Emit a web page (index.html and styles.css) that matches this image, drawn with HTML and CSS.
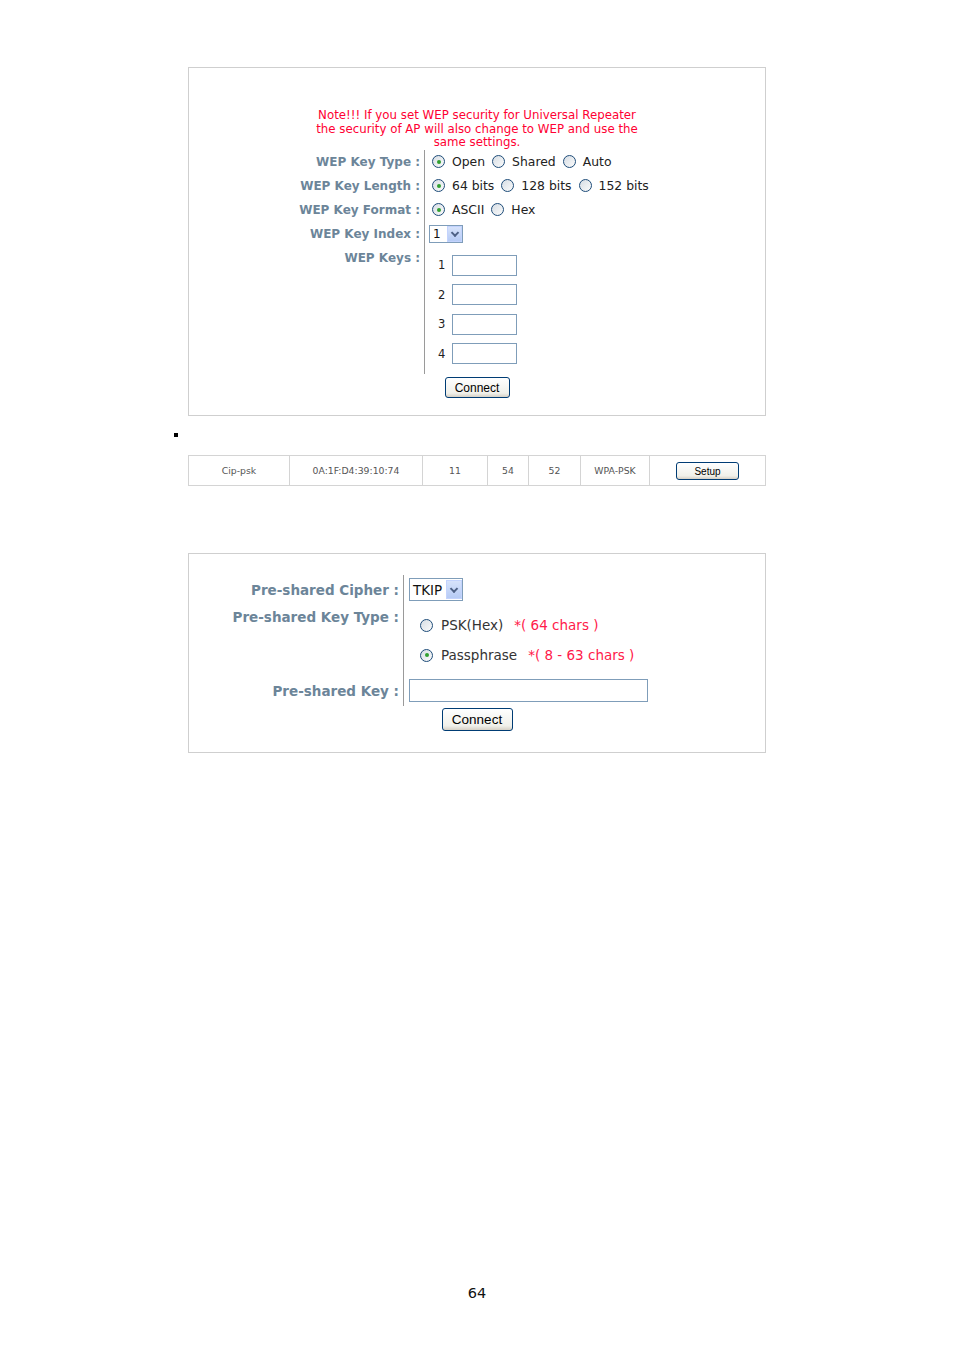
FILE: index.html
```html
<!DOCTYPE html>
<html lang="en">
<head>
  <meta charset="UTF-8" />
  <title>Universal Repeater Security</title>
  <link rel="stylesheet" href="styles.css">
</head>
<body>
  <div class="page">

    <!-- WEP settings -->
    <div class="panel wep-panel">
      <p class="note">Note!!! If you set WEP security for Universal Repeater<br>the security of AP will also change to WEP and use the<br>same settings.</p>

      <div class="form-grid wep-grid">
        <div class="label">WEP Key Type :</div>
        <div class="field">
          <span class="radio checked"></span><span class="opt">Open</span>
          <span class="radio"></span><span class="opt">Shared</span>
          <span class="radio"></span><span class="opt">Auto</span>
        </div>

        <div class="label">WEP Key Length :</div>
        <div class="field">
          <span class="radio checked"></span><span class="opt">64 bits</span>
          <span class="radio"></span><span class="opt">128 bits</span>
          <span class="radio"></span><span class="opt">152 bits</span>
        </div>

        <div class="label">WEP Key Format :</div>
        <div class="field">
          <span class="radio checked"></span><span class="opt">ASCII</span>
          <span class="radio"></span><span class="opt">Hex</span>
        </div>

        <div class="label">WEP Key Index :</div>
        <div class="field">
          <span class="select small-select"><span class="select-val">1</span><span class="select-btn"></span></span>
        </div>

        <div class="label keys-label">WEP Keys :</div>
        <div class="field keys">
          <div class="key-row"><span class="key-no">1</span><span class="text-input key-input"></span></div>
          <div class="key-row"><span class="key-no">2</span><span class="text-input key-input"></span></div>
          <div class="key-row"><span class="key-no">3</span><span class="text-input key-input"></span></div>
          <div class="key-row"><span class="key-no">4</span><span class="text-input key-input"></span></div>
        </div>
      </div>

      <div class="btn-row"><span class="btn wep-btn">Connect</span></div>
    </div>

    <div class="bullet"></div>

    <!-- site survey row -->
    <table class="survey">
      <tr>
        <td class="c1">Cip-psk</td>
        <td class="c2">0A:1F:D4:39:10:74</td>
        <td class="c3">11</td>
        <td class="c4">54</td>
        <td class="c5">52</td>
        <td class="c6">WPA-PSK</td>
        <td class="c7"><span class="btn setup-btn">Setup</span></td>
      </tr>
    </table>

    <!-- WPA settings -->
    <div class="panel psk-panel">
      <div class="form-grid psk-grid">
        <div class="label">Pre-shared Cipher :</div>
        <div class="field">
          <span class="select big-select"><span class="select-val">TKIP</span><span class="select-btn"></span></span>
        </div>

        <div class="label type-label">Pre-shared Key Type :</div>
        <div class="field psk-types">
          <div class="psk-opt"><span class="radio"></span><span class="opt">PSK(Hex)</span><span class="hint">*( 64 chars )</span></div>
          <div class="psk-opt"><span class="radio checked"></span><span class="opt">Passphrase</span><span class="hint">*( 8 - 63 chars )</span></div>
        </div>

        <div class="label key-label">Pre-shared Key :</div>
        <div class="field">
          <span class="text-input psk-input"></span>
        </div>
      </div>

      <div class="btn-row"><span class="btn psk-btn">Connect</span></div>
    </div>

    <div class="page-no">64</div>
  </div>
</body>
</html>
```

FILE: styles.css
```css
body {
  margin: 0;
  background: #fff;
  font-family: "DejaVu Sans", Verdana, sans-serif;
}

.page {
  width: 954px;
  height: 1351px;
  padding-top: 67px;
  box-sizing: border-box;
  position: relative;
}

.panel {
  margin-left: 188px;
  width: 576px;
  border: 1px solid #cfcfcf;
}

/* ---------- WEP panel ---------- */

.wep-panel {
  height: 347px;
}

.note {
  margin: 41px 0 0;
  color: #ff0033;
  font-size: 11.8px;
  line-height: 13.6px;
  text-align: center;
}

.form-grid {
  display: grid;
}

.label {
  color: #6c8599;
  font-weight: bold;
  text-align: right;
  padding-right: 4px;
  white-space: nowrap;
}

.field {
  border-left: 1px solid #9a9a9a;
  display: flex;
  align-items: center;
  white-space: nowrap;
}

.wep-grid {
  grid-template-columns: 235px 1fr;
  grid-template-rows: repeat(4, 24px) auto;
  margin-top: 0;
  font-size: 12px;
}

.wep-grid .label {
  line-height: 24px;
}

.wep-grid .field {
  padding-left: 7px;
  font-size: 12.4px;
  color: #222;
}

.radio {
  width: 11px;
  height: 11px;
  border: 1px solid #1e4c79;
  border-radius: 50%;
  background: linear-gradient(135deg, #d6dde4, #fbfbfb);
  box-sizing: content-box;
  display: inline-flex;
  align-items: center;
  justify-content: center;
  flex: none;
}

.radio.checked::after {
  content: "";
  width: 4px;
  height: 4px;
  border-radius: 50%;
  background: #30a030;
}

.wep-grid .opt {
  margin-left: 7px;
  margin-right: 7px;
}

.select {
  display: inline-flex;
  align-items: center;
  border: 1px solid #7f9db9;
  background: #fff;
  color: #111;
}

.select-btn {
  background: linear-gradient(#d7e3fb, #b6cbf5);
  border: 1px solid #c3d3fd;
  position: relative;
}

.select-btn::after {
  content: "";
  position: absolute;
  left: 50%;
  top: 50%;
  width: 4px;
  height: 4px;
  border-right: 2px solid #4d6185;
  border-bottom: 2px solid #4d6185;
  transform: translate(-50%, -70%) rotate(45deg);
}

.small-select {
  height: 16px;
  margin-left: -3px;
  font-size: 12px;
}

.small-select .select-val {
  width: 14px;
  padding-left: 3px;
}

.small-select .select-btn {
  width: 13px;
  height: 14px;
}

.keys-label {
  align-self: start;
}

.wep-grid .keys {
  flex-direction: column;
  align-items: flex-start;
  padding-top: 5px;
  padding-bottom: 6px;
  padding-left: 13px;
}

.key-row {
  height: 29.4px;
  flex: none;
  display: flex;
  align-items: center;
}

.key-no {
  width: 14px;
  font-size: 11.5px;
  color: #222;
}

.text-input {
  display: inline-block;
  border: 1px solid #7f9db9;
  background: #fff;
  box-sizing: border-box;
}

.key-input {
  width: 65px;
  height: 21px;
}

.btn-row {
  display: flex;
  justify-content: center;
}

.btn {
  display: inline-flex;
  align-items: center;
  justify-content: center;
  box-sizing: border-box;
  border: 1px solid #003c74;
  border-radius: 3px;
  background: linear-gradient(#ffffff, #f0f0ea 80%, #d6d0c5);
  font-family: "Liberation Sans", Arial, sans-serif;
  color: #000;
}

.wep-btn {
  width: 65px;
  height: 21px;
  font-size: 12px;
  margin-top: 3px;
}

/* ---------- survey row ---------- */

.bullet {
  width: 4px;
  height: 4px;
  background: #000;
  margin: 17px 0 0 174px;
}

.survey {
  margin: 18px 0 0 188px;
  width: 578px;
  border-collapse: collapse;
  font-family: "DejaVu Sans", Tahoma, sans-serif;
  font-size: 9.3px;
  color: #555;
}

.survey td {
  height: 29px;
  padding: 0;
  border: 1px solid #d4d4d4;
  text-align: center;
}

.survey .c1 { width: 100px; }
.survey .c2 { width: 132px; }
.survey .c3 { width: 64px; }
.survey .c4 { width: 40px; }
.survey .c5 { width: 51px; }
.survey .c6 { width: 68px; }

.setup-btn {
  width: 63px;
  height: 18px;
  font-size: 10px;
  padding-top: 1px;
}

/* ---------- PSK panel ---------- */

.psk-panel {
  margin-top: 67px;
  height: 198px;
}

.psk-grid {
  grid-template-columns: 214px 1fr;
  margin-top: 21px;
  font-size: 13.5px;
}

.psk-grid .label {
  padding-right: 4px;
}

.psk-grid .field {
  padding-left: 5px;
  font-size: 13.5px;
  color: #333;
}

.psk-grid .label:nth-child(1) {
  line-height: 30px;
}

.big-select {
  height: 21px;
  margin-top: -1px;
  font-size: 13.5px;
}

.big-select .select-val {
  padding: 0 4px 0 3px;
}

.big-select .select-btn {
  width: 14px;
  height: 17px;
}

.type-label {
  align-self: start;
  padding-top: 4px;
}

.psk-types {
  flex-direction: column;
  align-items: flex-start;
  padding-top: 5px;
}

.psk-types .psk-opt {
  display: flex;
  align-items: center;
  height: 30px;
  padding-left: 11px;
}

.psk-types .opt {
  margin-left: 8px;
  margin-right: 11px;
}

.hint {
  color: #ff1a4a;
}

.key-label {
  line-height: 30px;
  padding-top: 6px;
}

.psk-grid .field:last-child {
  padding-top: 5px;
}

.psk-input {
  width: 239px;
  height: 23px;
}

.psk-btn {
  width: 71px;
  height: 23px;
  font-size: 13.5px;
  margin-top: 2px;
}

.page-no {
  position: absolute;
  left: 0;
  right: 0;
  top: 1285px;
  text-align: center;
  font-family: "DejaVu Sans", sans-serif;
  font-size: 14.5px;
  color: #111;
}
```
